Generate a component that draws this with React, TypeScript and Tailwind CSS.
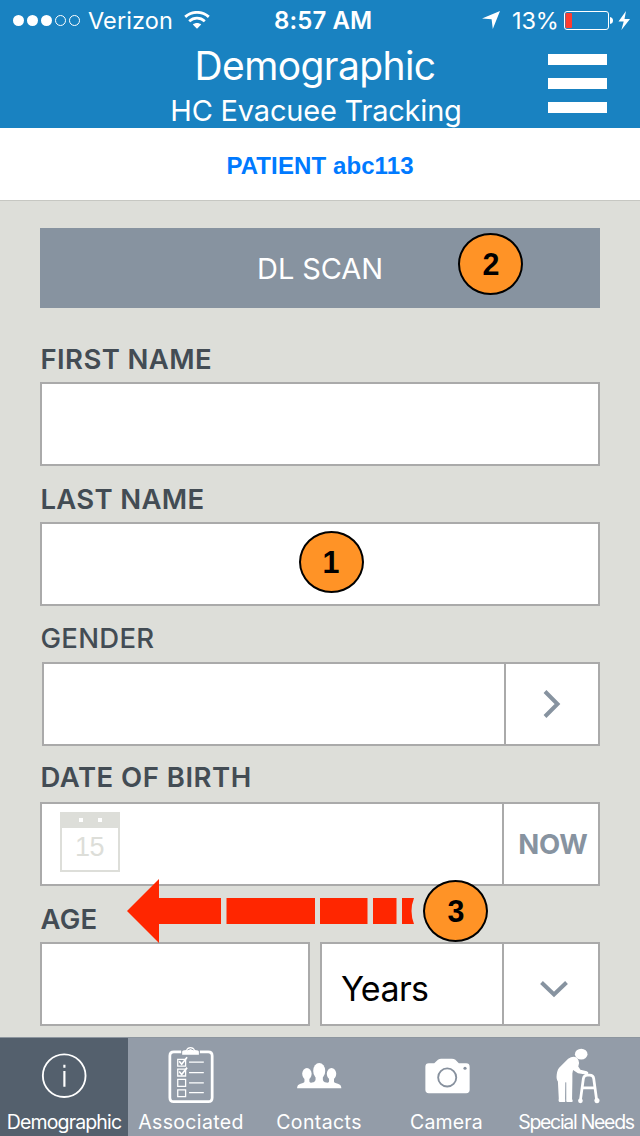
import React from 'react';

type BadgeProps = { n: number; className: string };

function Badge({ n, className }: BadgeProps) {
  return (
    <div
      className={`absolute z-10 flex h-[62px] w-[65px] items-center justify-center rounded-[50%] border-2 border-black bg-[#ff9326] font-['Liberation_Sans',sans-serif] text-[32px] leading-[36px] font-bold tracking-normal text-black ${className}`}
    >
      <span className="scale-x-95">{n}</span>
    </div>
  );
}

function Label({ children, className }: { children: React.ReactNode; className: string }) {
  return (
    <div className={`pl-[0.5px] text-[27.5px] leading-[34px] whitespace-nowrap text-[#434c54] ${className}`}>
      {children}
    </div>
  );
}

function StatusBar() {
  return (
    <div className="flex h-10 items-center text-[24px] leading-[40px]">
      <svg className="ml-[13px] h-[14px] w-[68px] shrink-0" viewBox="0 0 68 14" fill="none">
        <circle cx="5.5" cy="7.5" r="5.5" fill="white" />
        <circle cx="19.5" cy="7.5" r="5.5" fill="white" />
        <circle cx="33.5" cy="7.5" r="5.5" fill="white" />
        <circle cx="47.5" cy="7.5" r="5" stroke="white" />
        <circle cx="61.5" cy="7.5" r="5" stroke="white" />
      </svg>
      <span className="ml-[7px] w-[84px] pt-[2px] text-[23.5px] font-normal tracking-[0.1px] whitespace-nowrap">Verizon</span>
      <svg className="ml-[12px] h-[18px] w-[26px] shrink-0" viewBox="0 0 26 18" fill="none" stroke="white" strokeWidth="2.8">
        <path d="M1.2 5.9C8-.2 18-.2 24.8 5.9" />
        <path d="M5.200 10.200c4.600-4 11-4 15.600 0" />
        <path d="M13 17.7l-4.200-4.200c2.400-2 6-2 8.400 0z" fill="white" stroke="none" />
      </svg>
      <span className="ml-[64px] w-[99px] pt-[2px] font-semibold tracking-[0.1px] whitespace-nowrap">8:57 AM</span>
      <svg className="ml-[109px] h-[18px] w-[18px] shrink-0" viewBox="0 0 18 18" fill="white">
        <path d="M18 0L10.8 18 9.6 8.3 0 7.6z" />
      </svg>
      <span className="ml-[12px] w-[47px] pt-[2px] text-[23.5px] font-normal tracking-[-0.1px] whitespace-nowrap">13%</span>
      <svg className="ml-[5px] h-[20px] w-[67px] shrink-0" viewBox="0 0 67 20" fill="none">
        <rect x=".5" y="1.5" width="44" height="18" rx="2.5" stroke="white" />
        <rect x="1.500" y="3" width="6.500" height="15" rx="1" fill="#ff3b30" />
        <path d="M46 7q3 .5 3 3.500t-3 3.500z" fill="white" />
        <path d="M62 1L54.500 11.500h5.200L57.400 20 66 9h-5.500z" fill="white" />
      </svg>
    </div>
  );
}

function InfoIcon() {
  return (
    <svg className="h-[62px] w-[62px]" viewBox="0 0 62 62" fill="none" stroke="white">
      <circle cx="31.2" cy="31.2" r="21.7" strokeWidth="1.9" />
      <path d="M31.400 26.500v16M31.400 20v3" strokeWidth="2.2" />
    </svg>
  );
}

function ChecklistIcon() {
  return (
    <svg className="h-[62px] w-[62px]" viewBox="0 0 62 62" fill="none" stroke="white">
      <path d="M20 7h-7.500q-4 0-4 4v42.500q0 4 4 4h35q4 0 4-4V11q0-4-4-4H39" strokeWidth="2.8" />
      <path d="M21 10V7q0-2 4-2 1-3 4.500-3T34 5q4 0 4 2v3z" fill="white" stroke="none" />
      <path d="M26.500 5q3-2.500 6 0" stroke="#939ca8" />
      <path d="M16.500 14.500h8v7h-8zM16.500 24.500h8v7h-8zM16.500 35h8v7h-8zM16.500 45.500h8v7h-8z" strokeWidth="1.300" />
      <path d="M18 16.500l2.500 3 5.500-7M18 27l2.500 3 5.500-7" strokeWidth="1.700" />
      <path d="M28 17.500h15M28 28h15M28 38.500h15M28 48.500h15" strokeWidth="1.300" />
    </svg>
  );
}

function ContactsIcon() {
  return (
    <svg className="h-[62px] w-[62px]" viewBox="0 0 62 62" fill="white">
      <ellipse cx="17.700" cy="29.300" rx="4.800" ry="6" />
      <ellipse cx="42.700" cy="29.300" rx="4.800" ry="6" />
      <ellipse cx="30.200" cy="26.300" rx="6.100" ry="8" />
      <path d="M7.700 44q0-3.600 3.500-4.600 4-1.100 4-2.400V33h5v4q.5 1.500 2.600 1.200 3.700-.8 3.700-3.200v-4h7.400v4q0 2.400 3.700 3.200 2.100.3 2.600-1.200v-4h5v4q0 1.300 4 2.400 3.500 1 3.500 4.600z" />
    </svg>
  );
}

function CameraIcon() {
  return (
    <svg className="h-[62px] w-[62px]" viewBox="0 0 62 62">
      <path d="M11.500 18.500H17l3.800-3.500q1.400-1 3.200-1h11q2 0 3.500 1l3.500 3.500h7.500q3.500 0 3.500 3.500V45.500q0 3.500-3.500 3.500H11.500Q8 49 8 45.500V22q0-3.500 3.500-3.500z" fill="white" />
      <circle cx="30.200" cy="33" r="9.200" fill="none" stroke="#87919e" strokeWidth="1.900" />
      <circle cx="48.300" cy="23.600" r="1.600" fill="#87919e" />
    </svg>
  );
}

function WalkerIcon() {
  return (
    <svg className="h-[62px] w-[62px]" viewBox="0 0 62 62">
      <ellipse cx="36.300" cy="9.300" rx="6.400" ry="5.500" fill="white" />
      <path d="M28.500 12q3.500 0 5 3.500 1.500 3-.2 6.300l2.200 3.400 6.500 1.600q2 .7 1.500 2.200-.6 1-2.500.9l-8-1.200-5-3.200-.7 3.500v8l-.3 18q1.500 3-.3 3H22q-1.700 0-1.200-3l-.5-18-.3 18q1.500 3-.5 3h-5q-1.700 0-1-3.500L12.600 37q-1.800-2-1.200-7 .6-6 4-8.500l7.600-7.500q3-2 5.500-2z" fill="white" />
      <path d="M20.600 38v20" stroke="#939ca8" strokeWidth="1" />
      <path d="M35.500 56l3-22q.7-3.500 4-3.500h2.500q3.500 0 4 3.500l3 22M38 43.500h12" fill="none" stroke="white" strokeWidth="2.800" />
      <circle cx="35.500" cy="56.700" r="2.400" fill="white" />
      <circle cx="52.300" cy="56.500" r="2.600" fill="white" />
    </svg>
  );
}

const tabs = [
  { label: 'Demographic', icon: InfoIcon, text: 'tracking-[-0.85px]', bg: 'bg-[#54606d]' },
  { label: 'Associated', icon: ChecklistIcon, text: 'pr-[2px] tracking-[0.35px]', bg: '' },
  { label: 'Contacts', icon: ContactsIcon, text: 'pr-[2px] tracking-[0.4px]', bg: '' },
  { label: 'Camera', icon: CameraIcon, text: 'pr-[3px] tracking-[0.15px]', bg: '' },
  { label: 'Special Needs', icon: WalkerIcon, text: 'tracking-[-1.3px]', bg: '' },
];

export default function App() {
  return (
    <div className="relative flex h-[1136px] w-[640px] flex-col overflow-hidden bg-[#ddded9] font-[Inter,sans-serif]">
      <header className="relative h-32 shrink-0 bg-[#1982c1] text-white">
        <StatusBar />
        <h1 className="mt-[2px] pr-[10px] text-center text-[39px] leading-[48px] font-normal tracking-[-0.6px]">Demographic</h1>
        <p className="pr-[8px] text-center text-[29px] leading-[42px] font-normal tracking-[-0.2px]">HC Evacuee Tracking</p>
        <button aria-label="Menu" className="absolute top-[54px] right-[33px] flex w-[59px] flex-col gap-[13px]">
          <span className="h-[11px] bg-white" />
          <span className="h-[11px] bg-white" />
          <span className="h-[11px] bg-white" />
        </button>
      </header>
      <div className="flex h-[73px] shrink-0 items-center justify-center border-b border-[#c6c7c2] bg-white pt-[4px] font-['Liberation_Sans',sans-serif] text-[24px] font-bold tracking-[0.1px] text-[#007aff]">
        PATIENT abc113
      </div>
      <main className="flex flex-1 flex-col px-10 pt-[27px]">
        <button className="relative flex h-20 shrink-0 items-center justify-center bg-[#8793a0] pt-[1px] text-[29px] font-normal tracking-[-0.1px] text-white">
          DL SCAN
          <Badge n={2} className="top-[5px] left-[418px]" />
        </button>
        <Label className="mt-[34px] font-semibold tracking-[0.4px]">FIRST NAME</Label>
        <div className="mt-[6px] h-[84px] shrink-0 border-2 border-[#aaaaaa] bg-white" />
        <Label className="mt-[16px] font-semibold tracking-[0.3px]">LAST NAME</Label>
        <div className="relative mt-[6px] h-[84px] shrink-0 border-2 border-[#aaaaaa] bg-white">
          <Badge n={1} className="top-[7px] left-[257px] pr-[2px]" />
        </div>
        <Label className="mt-[15px] font-medium tracking-[0.3px]">GENDER</Label>
        <div className="mt-[7px] ml-[2px] flex h-[84px] shrink-0 border-2 border-[#aaaaaa] bg-white">
          <div className="flex-1" />
          <div className="flex w-[94px] items-center justify-center border-l-2 border-[#aaaaaa]">
            <svg className="h-[30px] w-[20px]" viewBox="0 0 20 30" fill="none" stroke="#8793a0" strokeWidth="4">
              <path d="M3 2.500L15.500 15 3 27.500" />
            </svg>
          </div>
        </div>
        <Label className="mt-[14px] font-semibold tracking-[0.5px]">DATE OF BIRTH</Label>
        <div className="mt-[8px] flex h-[84px] shrink-0 border-2 border-[#aaaaaa] bg-white">
          <div className="flex-1 pt-[8px] pl-[18px]">
            <div className="flex h-[60px] w-[60px] flex-col border-2 border-[#ddded9]">
              <div className="flex h-[14px] shrink-0 justify-center gap-[15px] bg-[#ddded9] pt-[4px]">
                <span className="h-[4px] w-[4px] bg-white" />
                <span className="h-[4px] w-[4px] bg-white" />
              </div>
              <div className="flex h-[38px] items-center justify-center pr-[1px] font-['Liberation_Sans',sans-serif] text-[27px] leading-[30px] tracking-[-0.5px] text-[#ddded9]">15</div>
            </div>
          </div>
          <div className="flex w-[96px] items-center justify-center border-l-2 border-[#aaaaaa] pt-[2px] pl-[4px] text-[27.5px] font-bold tracking-[-0.2px] text-[#8793a0]">NOW</div>
        </div>
        <Label className="mt-[16px] font-semibold tracking-[0.3px]">AGE</Label>
        <div className="mt-[6px] flex h-[84px] shrink-0 gap-[10px]">
          <div className="w-[270px] border-2 border-[#aaaaaa] bg-white" />
          <div className="flex flex-1 border-2 border-[#aaaaaa] bg-white">
            <div className="flex flex-1 items-center pt-[9px] pl-[19px] text-[34px] tracking-[-0.6px] text-black">Years</div>
            <div className="flex w-[96px] items-center justify-center border-l-2 border-[#aaaaaa] pt-[10px] pl-[5px]">
              <svg className="h-[20px] w-[30px]" viewBox="0 0 30 20" fill="none" stroke="#8793a0" strokeWidth="4">
                <path d="M2.500 3.500L15 15.500 27.500 3.500" />
              </svg>
            </div>
          </div>
        </div>
      </main>
      <svg className="absolute top-[878px] left-[126px] h-[66px] w-[290px]" viewBox="0 0 290 66" fill="#ff2600">
        <path d="M1 33L33 1v19h62v26H33v19z" />
        <path d="M100.500 20h88.500v26h-88.500zM194 20h47.500v26H194zM247 20h23.500v26H247zM276 20h12q-5 13 0 26h-12z" />
      </svg>
      <Badge n={3} className="top-[880px] left-[423px]" />
      <nav className="flex h-[99px] shrink-0 border-t border-[#8d969f] bg-[#939ca8] text-white">
        {tabs.map(({ label, icon: Icon, text, bg }) => (
          <div key={label} className={`flex w-32 flex-col items-center pt-[7px] ${bg}`}>
            <Icon />
            <span className={`mt-[2px] text-[19.5px] leading-[28px] font-normal whitespace-nowrap ${text}`}>{label}</span>
          </div>
        ))}
      </nav>
    </div>
  );
}
